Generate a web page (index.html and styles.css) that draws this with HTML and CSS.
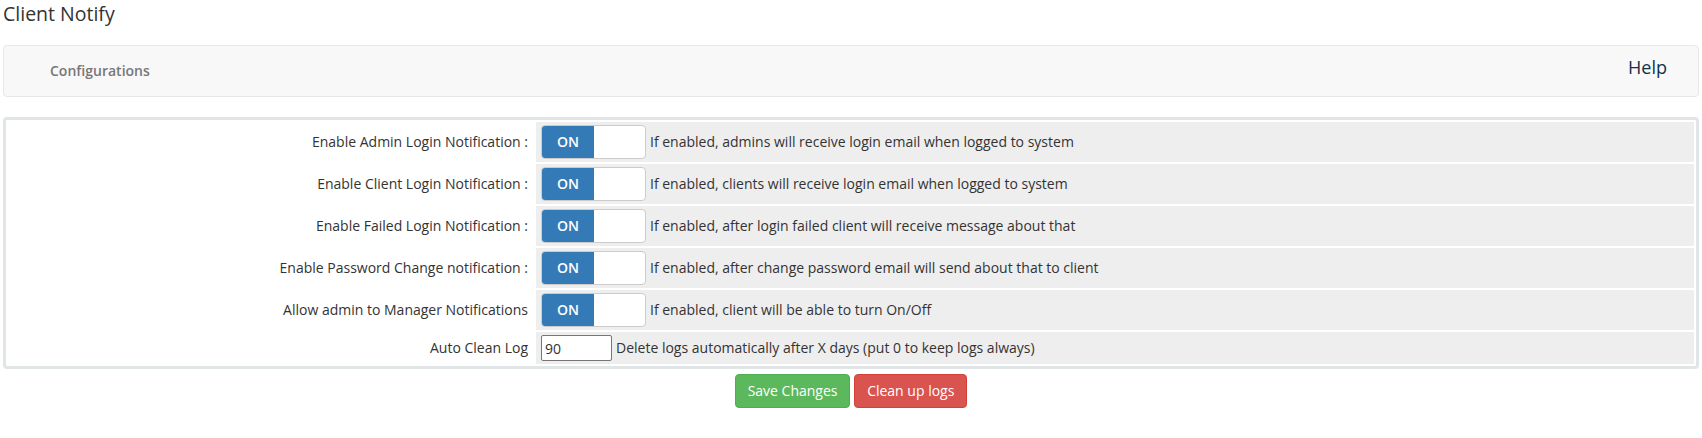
FILE: index.html
```html
<!DOCTYPE html>
<html lang="en">
<head>
    <meta charset="UTF-8">
    <title>Client Notify</title>
    <link rel="stylesheet" href="styles.css">
</head>
<body>

<h1 class="page-title">Client Notify</h1>

<nav class="module-nav">
    <a class="nav-link" href="#">Configurations</a>
    <a class="nav-help" href="#">Help</a>
</nav>

<form>
    <table class="form">
        <tr>
            <td class="fieldlabel">Enable Admin Login Notification :</td>
            <td class="fieldarea">
                <div class="field">
                    <span class="switch"><span class="switch-on">ON</span></span>
                    <span>If enabled, admins will receive login email when logged to system</span>
                </div>
            </td>
        </tr>
        <tr>
            <td class="fieldlabel">Enable Client Login Notification :</td>
            <td class="fieldarea">
                <div class="field">
                    <span class="switch"><span class="switch-on">ON</span></span>
                    <span>If enabled, clients will receive login email when logged to system</span>
                </div>
            </td>
        </tr>
        <tr>
            <td class="fieldlabel">Enable Failed Login Notification :</td>
            <td class="fieldarea">
                <div class="field">
                    <span class="switch"><span class="switch-on">ON</span></span>
                    <span>If enabled, after login failed client will receive message about that</span>
                </div>
            </td>
        </tr>
        <tr>
            <td class="fieldlabel">Enable Password Change notification :</td>
            <td class="fieldarea">
                <div class="field">
                    <span class="switch"><span class="switch-on">ON</span></span>
                    <span>If enabled, after change password email will send about that to client</span>
                </div>
            </td>
        </tr>
        <tr>
            <td class="fieldlabel">Allow admin to Manager Notifications</td>
            <td class="fieldarea">
                <div class="field">
                    <span class="switch"><span class="switch-on">ON</span></span>
                    <span>If enabled, client will be able to turn On/Off</span>
                </div>
            </td>
        </tr>
        <tr>
            <td class="fieldlabel">Auto Clean Log</td>
            <td class="fieldarea">
                <div class="field">
                    <input class="days" type="text" value="90">
                    <span>Delete logs automatically after X days (put 0 to keep logs always)</span>
                </div>
            </td>
        </tr>
    </table>

    <div class="btn-container">
        <button type="button" class="btn btn-success">Save Changes</button>
        <button type="button" class="btn btn-danger">Clean up logs</button>
    </div>
</form>

</body>
</html>
```

FILE: styles.css
```css
body {
    margin: 0;
    padding: 3px;
    font-family: "Open Sans", "Liberation Sans", sans-serif;
    font-size: 14px;
    line-height: 20px;
    color: #333;
    background: #fff;
}

.page-title {
    margin: 0 0 20px;
    font-size: 19.5px;
    line-height: 22px;
    font-weight: normal;
    color: #333;
}

/* module menu */
.module-nav {
    display: flex;
    justify-content: space-between;
    align-items: center;
    min-height: 50px;
    margin-bottom: 20px;
    padding: 0 31px 0 46px;
    background-color: #f8f8f8;
    border: 1px solid #e7e7e7;
    border-radius: 4px;
}
.nav-link {
    color: #777;
    font-size: 14px;
    font-weight: 600;
    text-decoration: none;
}
.nav-help {
    margin-bottom: 9px;
    color: #12324a;
    font-size: 18px;
    text-decoration: none;
}

/* settings table */
table.form {
    width: 100%;
    border: 3px solid #e0e5e8;
    border-radius: 4px;
    border-spacing: 2px;
    background: #fff;
}
.fieldlabel {
    width: 517px;
    padding: 3px 6px 3px 3px;
    text-align: right;
    vertical-align: middle;
    background-color: #fff;
}
.fieldarea {
    padding: 3px 5px;
    vertical-align: middle;
    background-color: #eee;
}
.field {
    display: flex;
    align-items: center;
    gap: 4px;
}

.switch {
    display: inline-block;
    width: 103px;
    height: 32px;
    border: 1px solid #ccc;
    border-radius: 4px;
    overflow: hidden;
    background: #fff;
}
.switch-on {
    display: block;
    width: 52px;
    padding: 6px 0;
    background-color: #337ab7;
    color: #fff;
    font-weight: 600;
    text-align: center;
}

.days {
    box-sizing: border-box;
    width: 71px;
    height: 26px;
    padding: 1px 3px;
    border: 1px solid #767676;
    border-radius: 2px;
    font-family: "Open Sans", "Liberation Sans", sans-serif;
    font-size: 14px;
    color: #333;
}

/* buttons */
.btn-container {
    margin-top: 5px;
    text-align: center;
}
.btn {
    display: inline-block;
    padding: 6px 12px;
    font-family: "Open Sans", "Liberation Sans", sans-serif;
    font-size: 14px;
    line-height: 20px;
    color: #fff;
    border: 1px solid transparent;
    border-radius: 4px;
    cursor: pointer;
}
.btn-success {
    background-color: #5cb85c;
    border-color: #4cae4c;
}
.btn-danger {
    background-color: #d9534f;
    border-color: #d43f3a;
}
```
